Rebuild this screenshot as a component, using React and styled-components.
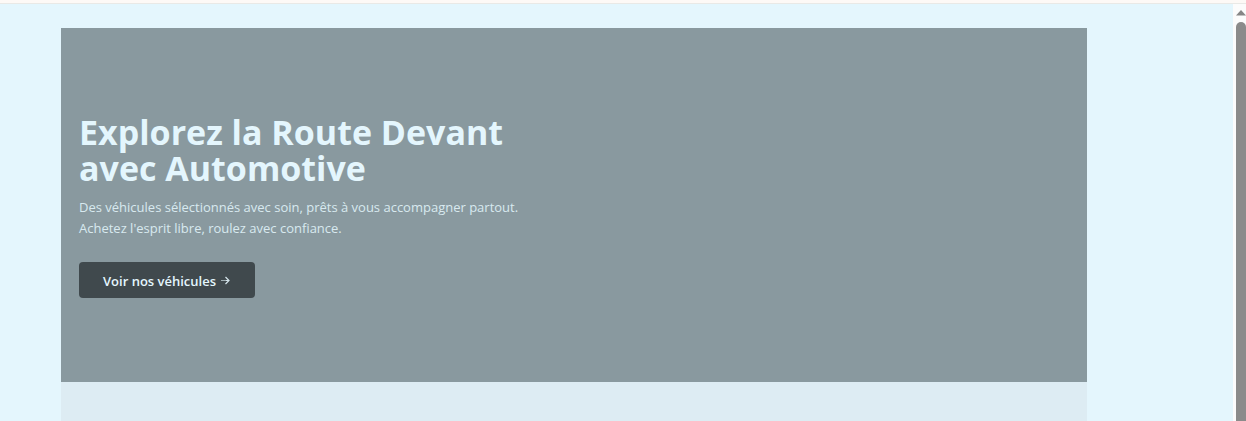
import React from "react";
import styled, { createGlobalStyle } from "styled-components";

const GlobalStyle = createGlobalStyle`
  * { box-sizing: border-box; }
  body {
    margin: 0;
    background: #e4f6fd;
    font-family: "Open Sans", "Noto Sans", sans-serif;
    overflow: hidden;
  }
`;

const Window = styled.div`
  display: flex;
  flex-direction: column;
  height: 100vh;
`;

const TopEdge = styled.div`
  flex: none;
  height: 4px;
  background: #fdf9f6;
  border-bottom: 1px solid #e9e9e6;
`;

const Viewport = styled.div`
  flex: 1;
  display: flex;
  min-height: 0;
`;

const Page = styled.main`
  flex: 1;
  display: flex;
  flex-direction: column;
  min-width: 0;
  padding: 24px 146px 0 61px;
  overflow: hidden;
`;

const Hero = styled.section`
  flex: none;
  padding: 86px 18px 84px;
  background: #89999f;
`;

const Title = styled.h1`
  max-width: 448px;
  margin: 0 0 11px;
  color: #e4f6fd;
  font-size: 34px;
  line-height: 36px;
  font-weight: 700;
`;

const Lead = styled.p`
  max-width: 448px;
  margin: 0 0 23px;
  color: #d8e9ef;
  font-size: 13px;
  line-height: 21px;
`;

const Button = styled.button`
  display: flex;
  align-items: center;
  justify-content: center;
  gap: 4px;
  height: 36px;
  padding: 2px 23px 0 24px;
  border: 0;
  border-radius: 4px;
  background: #40494d;
  color: #e4f6fd;
  font-family: inherit;
  font-size: 13px;
  line-height: 20px;
  font-weight: 600;
`;

const NextSection = styled.section`
  flex: 1;
  background: #ddecf3;
`;

const Scrollbar = styled.div`
  flex: none;
  display: flex;
  flex-direction: column;
  align-items: flex-end;
  gap: 6px;
  width: 13px;
  padding-top: 6px;
  background: #fcfcfc;
`;

const Thumb = styled.div`
  flex: 1;
  width: 10px;
  border-radius: 5px 5px 0 0;
  background: #8b8b8b;
`;

export default function App() {
  return (
    <Window>
      <GlobalStyle />
      <TopEdge />
      <Viewport>
        <Page>
          <Hero>
            <Title>Explorez la Route Devant avec Automotive</Title>
            <Lead>
              Des véhicules sélectionnés avec soin, prêts à vous accompagner
              partout. Achetez l'esprit libre, roulez avec confiance.
            </Lead>
            <Button type="button">
              Voir nos véhicules
              <svg width="12" height="12" viewBox="0 0 12 12" fill="none" aria-hidden="true">
                <path d="M1 5.5h6" stroke="#a3b1b6" />
                <path d="M5.5 2L9 5.5 5.5 9M6 5.5h3" stroke="#d5e5eb" strokeWidth="1.2" />
              </svg>
            </Button>
          </Hero>
          <NextSection />
        </Page>
        <Scrollbar aria-hidden="true">
          <svg width="10" height="6" viewBox="0 0 10 6">
            <path d="M5 0l5 5.5H0z" fill="#868686" />
          </svg>
          <Thumb />
        </Scrollbar>
      </Viewport>
    </Window>
  );
}
